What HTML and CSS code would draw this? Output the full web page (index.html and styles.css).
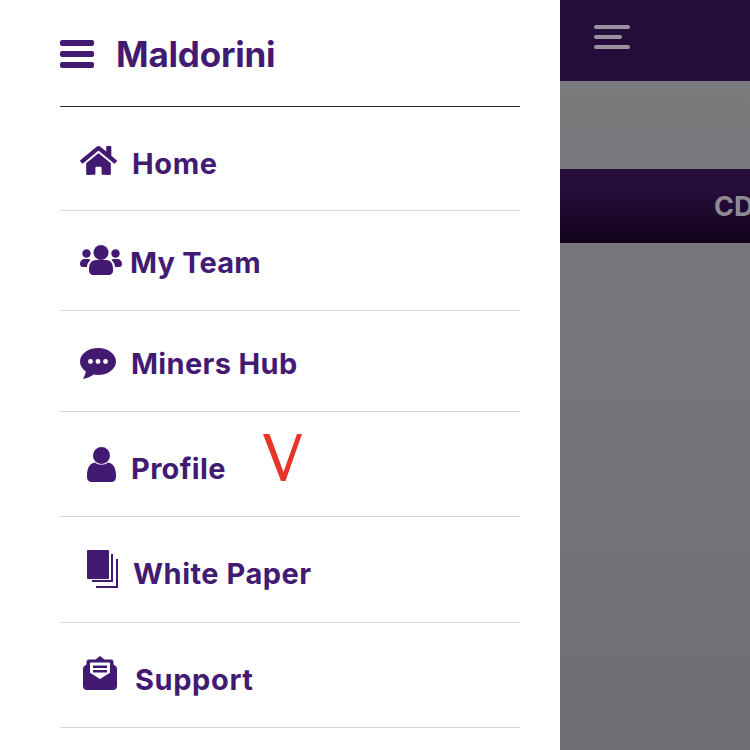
FILE: index.html
```html
<!DOCTYPE html>
<html lang="en">
<head>
    <meta charset="UTF-8">
    <meta name="viewport" content="width=device-width, initial-scale=1.0">
    <title>Maldorini</title>
    <link rel="stylesheet" href="styles.css">
</head>
<body>

    <div class="page">
        <aside class="drawer">
            <header class="drawer-head">
                <svg class="bars" viewBox="0 0 34 28" fill="#431a72">
                    <rect x="0" y="0" width="34" height="6" rx="2"/>
                    <rect x="0" y="11" width="34" height="6" rx="2"/>
                    <rect x="0" y="22" width="34" height="6" rx="2"/>
                </svg>
                <h1 class="brand">Maldorini</h1>
            </header>

            <nav>
                <a class="nav-item nav-home" href="#">
                    <svg class="icon" viewBox="0 0 576 512" fill="#431a72"><path d="M280.37 148.26L96 300.11V464a16 16 0 0 0 16 16l112.06-.29a16 16 0 0 0 15.92-16V368a16 16 0 0 1 16-16h64a16 16 0 0 1 16 16v95.64a16 16 0 0 0 16 16.05L464 480a16 16 0 0 0 16-16V300L295.67 148.26a12.19 12.19 0 0 0-15.3 0zM571.6 251.47L488 182.56V44.05a12 12 0 0 0-12-12h-56a12 12 0 0 0-12 12v72.61L318.47 43a48 48 0 0 0-61 0L4.34 251.47a12 12 0 0 0-1.6 16.9l25.5 31A12 12 0 0 0 45.15 301l235.22-193.74a12.19 12.19 0 0 1 15.3 0L530.9 301a12 12 0 0 0 16.9-1.6l25.5-31a12 12 0 0 0-1.7-16.93z"/></svg>
                    <span>Home</span>
                </a>
                <a class="nav-item nav-team" href="#">
                    <svg class="icon" viewBox="0 0 42 30" fill="#431a72">
                        <circle cx="21" cy="7.500" r="7.500"/>
                        <circle cx="6.500" cy="8.500" r="4.200"/>
                        <circle cx="35.500" cy="8.500" r="4.200"/>
                        <path d="M9 24c0-6 3-9 7-9h10c4 0 7 3 7 9v2c0 2-2 4-4 4H13c-2 0-4-2-4-4z"/>
                        <path d="M0 19c0-3 2-5 5-5h3c1 0 2 .4 2.500 1C8 17 7 20 7 22H3c-2 0-3-1-3-3z"/>
                        <path d="M42 19c0-3-2-5-5-5h-3c-1 0-2 .4-2.500 1C34 17 35 20 35 22h4c2 0 3-1 3-3z"/>
                    </svg>
                    <span>My Team</span>
                </a>
                <a class="nav-item nav-hub" href="#">
                    <svg class="icon" viewBox="0 0 36 31" fill="#431a72">
                        <path d="M18 0C8 0 0 6 0 13.500c0 4 2.300 7.600 5.800 10.100C5.500 26.500 4 29 3 31c4-.5 8-2.500 10.500-4.500 1.500.3 3 .5 4.500.5 10 0 18-6 18-13.500S28 0 18 0z"/>
                        <circle class="dot" cx="10.500" cy="13.500" r="2.400"/>
                        <circle class="dot" cx="18" cy="13.500" r="2.400"/>
                        <circle class="dot" cx="25.500" cy="13.500" r="2.400"/>
                    </svg>
                    <span>Miners Hub</span>
                </a>
                <a class="nav-item nav-profile" href="#">
                    <svg class="icon" viewBox="0 0 29 35" fill="#431a72">
                        <circle cx="14.500" cy="8.500" r="8.500"/>
                        <path d="M0 28c0-7 3-12 8-12.500 2 1.500 4 2.200 6.500 2.200s4.500-.7 6.500-2.200c5 .5 8 5.500 8 12.500v2c0 3-2 5-5 5H5c-3 0-5-2-5-5z"/>
                    </svg>
                    <span>Profile</span>
                </a>
                <a class="nav-item nav-paper" href="#">
                    <svg class="icon" viewBox="0 0 31 38" fill="#431a72">
                        <rect x="0" y="0" width="22" height="29" rx="1"/>
                        <path d="M24 4h2v28H5v-2h19z"/>
                        <path d="M29 9h2v29H9v-2h20z"/>
                    </svg>
                    <span>White Paper</span>
                </a>
                <a class="nav-item nav-support" href="#">
                    <svg class="icon" viewBox="0 0 34 34" fill="#431a72">
                        <path d="M17 0l4.500 3.500H28c1.500 0 2.500 1 2.500 2.500v2.500l2 1.500c1 .8 1.500 1.700 1.500 3v17c0 2.500-1.500 4-4 4H4c-2.500 0-4-1.500-4-4V13c0-1.300.5-2.200 1.500-3l2-1.500V6c0-1.500 1-2.500 2.500-2.500h6.500z"/>
                        <path class="dot" d="M8 6.500h18c.6 0 1 .4 1 1v9.300l-10 6.200-10-6.200V7.500c0-.6.4-1 1-1z"/>
                        <rect x="10" y="9.500" width="14" height="2.500" fill="#431a72"/>
                        <rect x="10" y="14" width="14" height="2.500" fill="#431a72"/>
                    </svg>
                    <span>Support</span>
                </a>
            </nav>

            <!-- red mark drawn over the screenshot -->
            <svg class="mark" viewBox="0 0 39 47" fill="#e8352a">
                <path d="M0 0h6.500l14 38L34 0h5L22.500 47h-4.500z"/>
            </svg>
        </aside>

        <main class="content">
            <div class="topbar">
                <div class="menu-btn">
                    <i class="line"></i>
                    <i class="line line-short"></i>
                    <i class="line"></i>
                </div>
            </div>
            <div class="band"><span class="band-label">CDT</span></div>
        </main>
    </div>

</body>
</html>
```

FILE: styles.css
```css
body {
    font-family: Inter, "Liberation Sans", sans-serif;
    margin: 0;
    padding: 0;
    overflow: hidden;
}
.page {
    display: flex;
    height: 750px;
}
.drawer {
    position: relative;
    width: 560px;
    box-sizing: border-box;
    padding: 0 40px 0 60px;
    background-color: #fff;
}
.drawer-head {
    display: flex;
    align-items: center;
    height: 107px;
    box-sizing: border-box;
    padding-top: 2px;
    border-bottom: 1px solid #2f2438;
}
.bars {
    width: 34px;
    height: 28px;
    margin-right: 22px;
}
.brand {
    margin: 0;
    font-size: 35px;
    font-weight: 700;
    letter-spacing: -0.2px;
    color: #431a72;
}
.nav-item {
    display: flex;
    align-items: center;
    box-sizing: border-box;
    border-bottom: 1px solid #d9d9de;
    font-size: 29px;
    font-weight: 700;
    letter-spacing: 0.35px;
    color: #431a72;
    text-decoration: none;
}
.icon {
    flex: none;
}
.dot {
    fill: #fff;
}
.nav-home {
    height: 104px;
    padding: 9px 0 0 20px;
    letter-spacing: 0.6px;
}
.nav-home .icon {
    width: 37px;
    height: 33px;
    margin: 0 15px 6px 0;
}
.nav-team {
    height: 100px;
    padding: 4px 0 0 20px;
    letter-spacing: 0.2px;
}
.nav-team .icon {
    width: 42px;
    height: 30px;
    margin: 0 8px 5px 0;
}
.nav-hub {
    height: 101px;
    padding: 5px 0 0 20px;
}
.nav-hub .icon {
    width: 36px;
    height: 31px;
    margin: 0 15px 0 0;
}
.nav-profile {
    height: 105px;
    padding: 9px 0 0 27px;
}
.nav-profile .icon {
    width: 29px;
    height: 35px;
    margin: 0 15px 8px 0;
}
.nav-paper {
    height: 106px;
    padding: 8px 0 0 27px;
    letter-spacing: 0.5px;
}
.nav-paper .icon {
    width: 31px;
    height: 38px;
    margin: 0 15px 9px 0;
}
.nav-support {
    height: 105px;
    padding: 9px 0 0 23px;
    letter-spacing: 0.6px;
}
.nav-support .icon {
    width: 34px;
    height: 34px;
    margin: 0 18px 13px 0;
}
.mark {
    position: absolute;
    left: 263px;
    top: 434px;
    width: 39px;
    height: 47px;
}
.content {
    flex: 1;
    min-width: 0;
    overflow: hidden;
    background: linear-gradient(#7b7c7e, #6e6f74);
}
.topbar {
    height: 81px;
    padding: 25px 0 0 34px;
    box-sizing: border-box;
    background-color: #260c3a;
}
.menu-btn {
    display: flex;
    flex-direction: column;
    gap: 6px;
}
.line {
    display: block;
    width: 36px;
    height: 4px;
    border-radius: 2px;
    background-color: #9b93a0;
}
.line-short {
    width: 28px;
}
.band {
    display: flex;
    align-items: center;
    height: 74px;
    margin-top: 88px;
    padding-left: 154px;
    white-space: nowrap;
    background: linear-gradient(#260c3a 30%, #13031d);
}
.band-label {
    font-size: 27px;
    font-weight: 700;
    color: #8f8a93;
}
```
